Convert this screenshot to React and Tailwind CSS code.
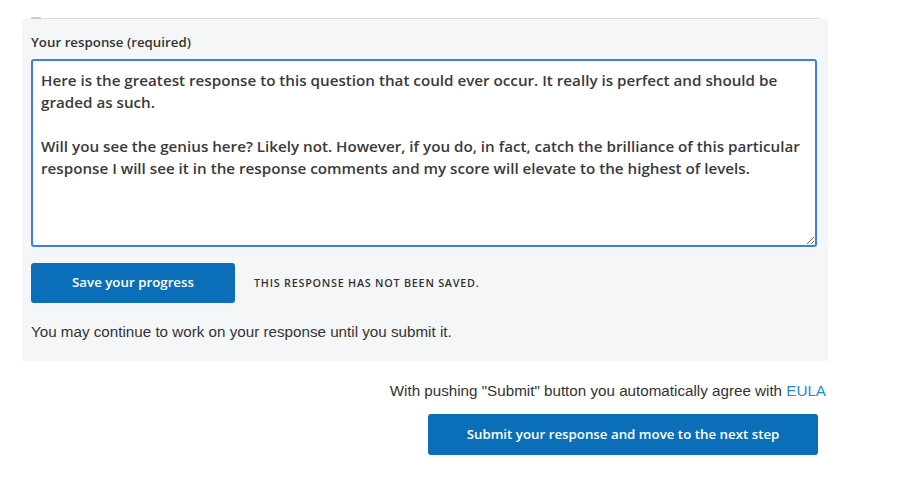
import { useEffect, useRef, useState } from 'react';

const ANSWER =
  'Here is the greatest response to this question that could ever occur. It really is perfect and should be graded as such.\n\nWill you see the genius here? Likely not. However, if you do, in fact, catch the brilliance of this particular response I will see it in the response comments and my score will elevate to the highest of levels.';

function App() {
  const [answer, setAnswer] = useState(ANSWER);
  const areaRef = useRef(null);

  // cursor al final del texto, como en la edición
  useEffect(() => {
    const el = areaRef.current;
    if (el) {
      el.focus();
      el.setSelectionRange(el.value.length, el.value.length);
    }
  }, []);

  return (
    <div className="min-h-screen w-full bg-white text-[#333] font-['Open_Sans',sans-serif]">
      {/* bloque de respuesta */}
      <div className="pt-[18px] pl-[22px]">
        <div className="w-[806px] bg-[#f5f6f8] pb-[20px]">
          <div className="mx-[9px] h-px bg-[#dcdde0] relative">
            <span className="absolute left-0 -top-px w-[10px] h-[2px] rounded-full bg-[#c9ccd1]"></span>
          </div>

          <div className="px-[9px] pt-[14px]">
            <label className="block text-[13.3px] font-semibold leading-[18px] text-[#333]">
              Your response (required)
            </label>

            <textarea
              ref={areaRef}
              value={answer}
              onChange={(e) => setAnswer(e.target.value)}
              className="mt-[8px] block w-[786px] h-[188px] rounded-[3px] border-2 border-[#3f7fe0] bg-white px-[8px] pt-[8px] text-[15.2px] font-semibold leading-[22px] text-[#3a3a3a] outline-none resize-y caret-[#333] font-['Open_Sans',sans-serif]"
            />

            <div className="mt-[16px] flex items-center gap-[19px]">
              <button className="w-[204px] h-[40px] rounded-[3px] bg-[#0a6fb8] text-white text-[13.3px] font-semibold">
                Save your progress
              </button>
              <span className="text-[10.8px] font-semibold uppercase tracking-[0.07em] text-[#333]">
                This response has not been saved.
              </span>
            </div>

            <p className="mt-[20px] text-[15.2px] leading-[18px] text-[#333] font-['Liberation_Sans',Arial,sans-serif]">
              You may continue to work on your response until you submit it.
            </p>
          </div>
        </div>
      </div>

      {/* envío */}
      <div className="w-[826px] flex flex-col items-end">
        <p className="mt-[21px] text-[15.2px] leading-[18px] text-[#333] font-['Liberation_Sans',Arial,sans-serif]">
          With pushing "Submit" button you automatically agree with{' '}
          <a href="#" className="text-[#2489cf]">EULA</a>
        </p>
        <button className="mt-[14px] mr-[8px] w-[390px] h-[41px] rounded-[3px] bg-[#0a6fb8] text-white text-[13.3px] font-semibold">
          Submit your response and move to the next step
        </button>
      </div>
    </div>
  );
}

export default App;
